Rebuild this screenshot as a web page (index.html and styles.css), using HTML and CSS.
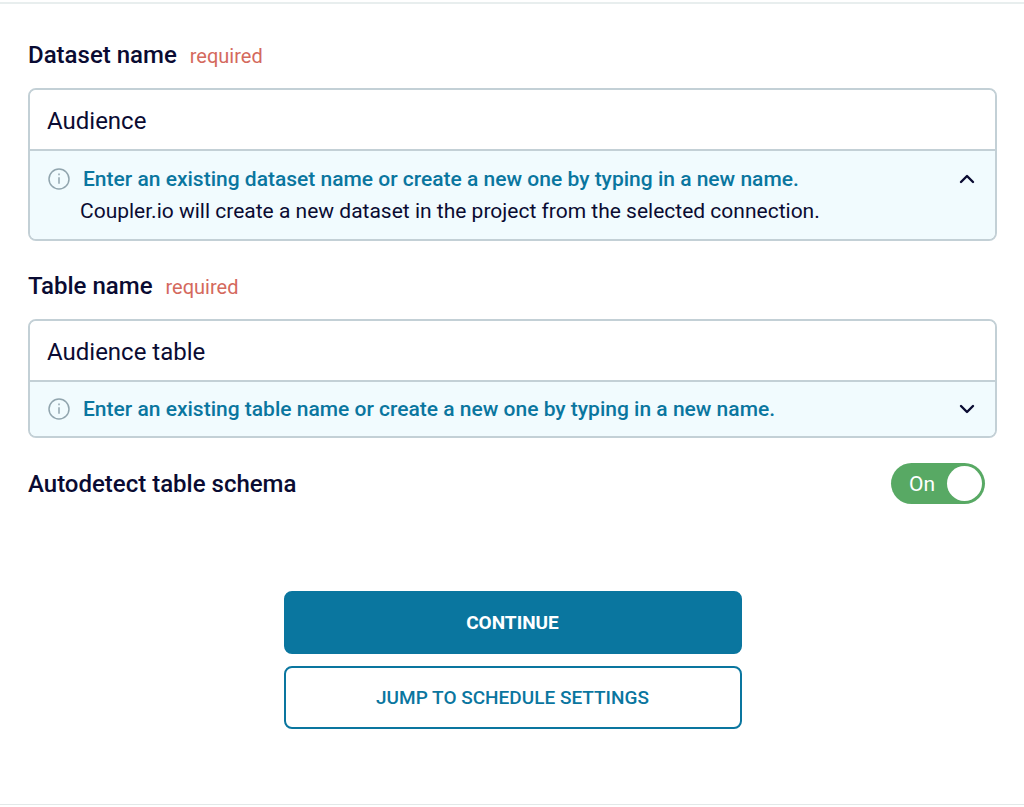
FILE: index.html
```html
<!DOCTYPE html>
<html lang="en">
<head>
    <meta charset="UTF-8">
    <meta name="viewport" content="width=device-width, initial-scale=1.0">
    <title>Destination settings</title>
    <link rel="stylesheet" href="styles.css">
</head>
<body>
    <form class="settings">
        <div class="field">
            <div class="field-head">
                <label class="field-label" for="datasetName">Dataset name</label>
                <span class="required">required</span>
            </div>
            <div class="field-box">
                <input class="field-input" type="text" id="datasetName" value="Audience">
                <details class="hint" open>
                    <summary>
                        <svg class="info-icon" viewBox="0 0 22 22" aria-hidden="true">
                            <circle cx="11" cy="11" r="10"/>
                            <path d="M11 9.2v6.6M11 5.6v1.7"/>
                        </svg>
                        <span class="hint-title">Enter an existing dataset name or create a new one by typing in a new name.</span>
                        <svg class="chevron" viewBox="0 0 16 10" aria-hidden="true">
                            <path d="M2 2l6 6 6-6"/>
                        </svg>
                    </summary>
                    <p>Coupler.io will create a new dataset in the project from the selected connection.</p>
                </details>
            </div>
        </div>

        <div class="field">
            <div class="field-head">
                <label class="field-label" for="tableName">Table name</label>
                <span class="required">required</span>
            </div>
            <div class="field-box">
                <input class="field-input" type="text" id="tableName" value="Audience table">
                <details class="hint">
                    <summary>
                        <svg class="info-icon" viewBox="0 0 22 22" aria-hidden="true">
                            <circle cx="11" cy="11" r="10"/>
                            <path d="M11 9.2v6.6M11 5.6v1.7"/>
                        </svg>
                        <span class="hint-title">Enter an existing table name or create a new one by typing in a new name.</span>
                        <svg class="chevron" viewBox="0 0 16 10" aria-hidden="true">
                            <path d="M2 2l6 6 6-6"/>
                        </svg>
                    </summary>
                </details>
            </div>
        </div>

        <div class="switch-row">
            <label class="field-label" for="autodetect">Autodetect table schema</label>
            <div class="switch">
                <input type="checkbox" id="autodetect" checked>
                <span class="switch-text">On</span>
            </div>
        </div>

        <div class="actions">
            <button class="btn btn-primary" type="button">CONTINUE</button>
            <button class="btn btn-outline" type="button">JUMP TO SCHEDULE SETTINGS</button>
        </div>
    </form>
</body>
</html>
```
FILE: styles.css
```css
* {
    box-sizing: border-box;
}
body {
    margin: 0;
    padding-top: 2px;
    font-family: Roboto, Arial, sans-serif;
    color: #0a0b32;
    background: #fff;
}
.settings {
    padding: 35px 27px 75px 28px;
    border-top: 2px solid #e8eeee;
    border-bottom: 1px solid #e2e8e8;
}
.field + .field {
    margin-top: 29px;
}
.field-head {
    display: flex;
    align-items: baseline;
    gap: 13px;
    margin-bottom: 16px;
}
.field-label {
    font-size: 24px;
    font-weight: 500;
    line-height: 32px;
}
.required {
    font-size: 20px;
    line-height: 32px;
    color: #d4695d;
}
.field-box {
    border: 2px solid #c3d0d6;
    border-radius: 8px;
    overflow: hidden;
}
.field-input {
    display: block;
    width: 100%;
    height: 59px;
    padding: 2px 17px 0;
    border: none;
    font-family: inherit;
    font-size: 24px;
    color: inherit;
    background: #fff;
    outline: none;
}
.hint {
    padding: 12px 20px 12px 18px;
    border-top: 2px solid #c3d0d6;
    font-size: 21px;
    line-height: 32px;
    background: #f1fbfe;
}
.hint:not([open]) {
    padding-top: 11px;
    padding-bottom: 11px;
}
.hint summary {
    display: flex;
    align-items: center;
    list-style: none;
    cursor: pointer;
}
.hint p {
    margin: 0 0 0 32px;
}
.hint-title {
    flex: 1;
    margin-left: 13px;
    font-weight: 500;
    color: #0a769f;
}
.info-icon {
    width: 22px;
    height: 22px;
    fill: none;
    stroke: #91a5ae;
    stroke-width: 1.5;
}
.chevron {
    width: 16px;
    height: 10px;
    fill: none;
    stroke: #0a0b32;
    stroke-width: 2.4;
    stroke-linecap: round;
    stroke-linejoin: round;
}
.hint[open] .chevron {
    transform: rotate(180deg);
}
.switch-row {
    display: flex;
    justify-content: space-between;
    align-items: center;
    margin-top: 25px;
    padding-right: 12px;
}
.switch {
    display: grid;
    align-items: center;
}
.switch input,
.switch-text {
    grid-area: 1 / 1;
}
.switch input {
    appearance: none;
    display: flex;
    align-items: center;
    justify-content: flex-end;
    width: 94px;
    height: 41px;
    margin: 0;
    padding: 3px;
    border-radius: 21px;
    background: #58a964;
    cursor: pointer;
}
.switch input::before {
    content: "";
    width: 35px;
    height: 35px;
    border-radius: 50%;
    background: #fff;
}
.switch input:not(:checked) {
    justify-content: flex-start;
    background: #91a5ae;
}
.switch input:not(:checked) + .switch-text {
    visibility: hidden;
}
.switch-text {
    padding-left: 18px;
    font-size: 21px;
    line-height: 32px;
    color: #fff;
    pointer-events: none;
}
.actions {
    display: flex;
    flex-direction: column;
    gap: 12px;
    max-width: 458px;
    margin: 87px auto 0;
}
.btn {
    height: 63px;
    border: 2px solid #0a769f;
    border-radius: 8px;
    font-family: inherit;
    font-size: 19px;
    font-weight: 500;
    cursor: pointer;
}
.btn-primary {
    font-weight: 700;
    color: #fff;
    background: #0a769f;
}
.btn-outline {
    color: #0a769f;
    background: #fff;
}
```
